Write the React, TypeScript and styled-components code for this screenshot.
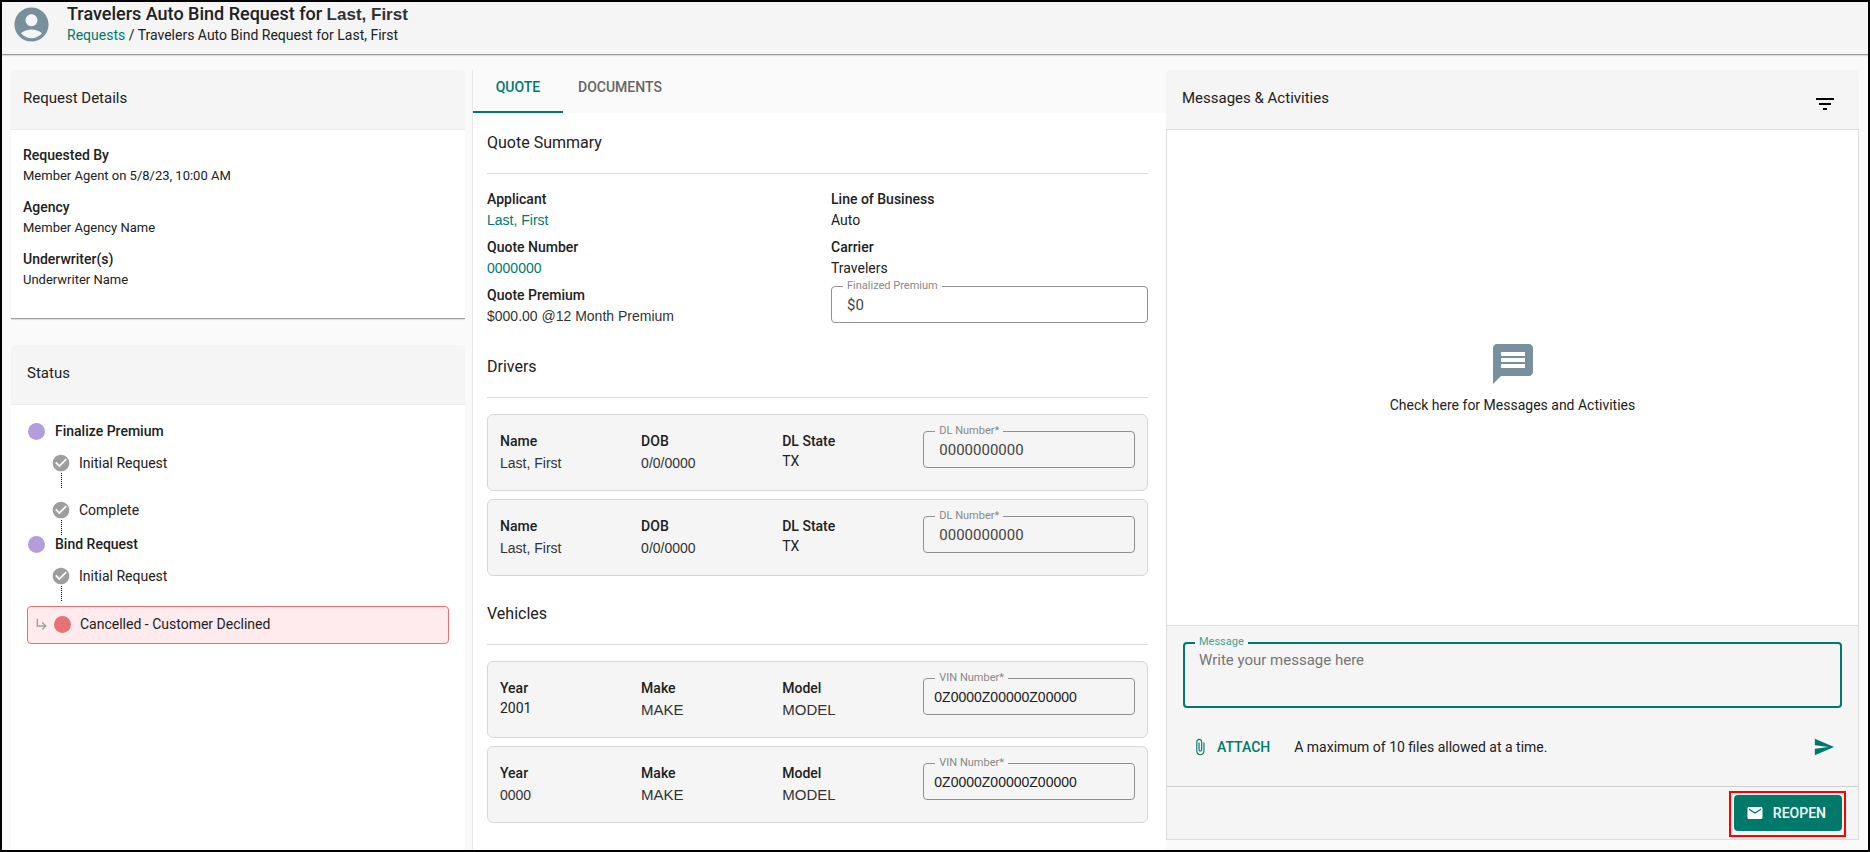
import React, { useId } from "react";
import styled, { createGlobalStyle, css } from "styled-components";
import {
  MdAccountCircle,
  MdAttachFile,
  MdCheckCircle,
  MdEmail,
  MdFilterList,
  MdMessage,
  MdSend,
  MdSubdirectoryArrowRight,
} from "react-icons/md";

const teal = "#00796b";
const ink = "#212121";
const slate = "#78909c";
const panelGrey = "#f5f5f5";
const line = "#dcdcdc";
const roboto = `Roboto, "Liberation Sans", sans-serif`;
const arial = `"Liberation Sans", Arial, sans-serif`;

const GlobalStyle = createGlobalStyle`
  *, *::before, *::after { box-sizing: border-box; }
  body {
    margin: 0;
    background: #fafafa;
    color: ${ink};
    font: 14px/20px ${roboto};
  }
  button, input, textarea { font: inherit; color: inherit; }
`;

const Page = styled.div`
  display: flex;
  flex-direction: column;
  min-height: 100vh;
  border: 2px solid #000;
`;

const TopBar = styled.header`
  display: flex;
  gap: 15px;
  padding: 1px 9px 9px;
  background: ${panelGrey};
  border-bottom: 1px solid #9e9e9e;
  box-shadow: 0 1px 1px rgba(0, 0, 0, 0.12);
  svg { flex: none; margin-top: 1px; color: ${slate}; }
`;

const Title = styled.h1`
  margin: 0;
  font-size: 18px;
  line-height: 22px;
  font-weight: 500;
  span { font-family: ${arial}; font-size: 17px; font-weight: 700; color: #333; }
`;

const Breadcrumb = styled.nav`
  line-height: 19px;
`;

const TextLink = styled.a`
  color: ${teal};
  text-decoration: none;
`;

const Columns = styled.main`
  flex: 1;
  display: grid;
  grid-template-columns: 2fr 3fr 3fr;
  padding: 15px 9px 0;
`;

const Sidebar = styled.div`
  display: flex;
  flex-direction: column;
  gap: 26px;
  padding-right: 8px;
`;

const Panel = styled.section<{ $grow?: boolean }>`
  background: #fff;
  border-radius: 4px 4px 0 0;
  ${(p) => (p.$grow ? css`flex: 1;` : css`border-bottom: 1px solid #9e9e9e; box-shadow: 0 1px 1px rgba(0, 0, 0, 0.12);`)}
`;

const PanelHeader = styled.div<{ $inset?: number; $divider?: string }>`
  display: flex;
  align-items: center;
  justify-content: space-between;
  height: 60px;
  padding: 0 ${(p) => p.$inset ?? 12}px 4px;
  background: ${panelGrey};
  border-bottom: 1px solid ${(p) => p.$divider ?? "#ececec"};
  border-radius: 4px 4px 0 0;
`;

const Heading = styled.h2`
  margin: 0;
  font-size: 15px;
  line-height: 20px;
  font-weight: 400;
`;

const Facts = styled.dl<{ $gap: number }>`
  display: flex;
  flex-direction: column;
  gap: ${(p) => p.$gap}px;
  margin: 0;
`;

const Term = styled.dt`
  line-height: 22px;
  font-weight: 500;
`;

const Value = styled.dd<{ $plain?: boolean; $large?: boolean }>`
  margin: 0;
  line-height: 20px;
  ${(p) => p.$plain && css`font-family: ${arial}; color: #333;`}
  ${(p) => p.$large && css`font-size: 15px;`}
`;

const DetailsBody = styled.div`
  padding: 14px 12px 28px;
  ${Value} { font-size: 13px; }
`;

const StatusBody = styled.div`
  padding: 17px 16px;
`;

const Stage = styled.h3`
  display: flex;
  align-items: center;
  gap: 10px;
  margin: 0;
  padding-left: 1px;
  font-size: 14px;
  line-height: 19px;
  font-weight: 500;
`;

const Dot = styled.span<{ $color: string }>`
  width: 17px;
  height: 17px;
  border-radius: 50%;
  background: ${(p) => p.$color};
`;

const Steps = styled.ul`
  margin: 0;
  padding: 0;
  list-style: none;
`;

const Step = styled.li`
  padding: 12px 0 0 24px;
`;

const StepRow = styled.div`
  display: flex;
  align-items: center;
  gap: 8px;
  height: 20px;
  svg { color: #9e9e9e; }
`;

const Connector = styled.div`
  height: 15px;
  margin-left: 10px;
  border-left: 1px dotted #000;
`;

const CancelledStep = styled.li`
  display: flex;
  align-items: center;
  height: 38px;
  margin-top: 5px;
  padding: 0 6px 2px;
  background: #ffebee;
  border: 1px solid #e57373;
  border-radius: 4px;
  svg { color: #9e9e9e; }
  ${Dot} { margin: 0 9px 0 4px; }
`;

const QuotePanel = styled.section`
  background: #fff;
  box-shadow: -1px 0 0 #e8e8e8;
`;

const Tabs = styled.div`
  display: flex;
  height: 43px;
  background: #fafafa;
`;

const Tab = styled.button<{ $active?: boolean }>`
  min-width: 90px;
  padding: 0 15px 7px;
  background: none;
  border: 0;
  border-bottom: 2px solid ${(p) => (p.$active ? teal : "transparent")};
  color: ${(p) => (p.$active ? teal : "#666")};
  font-weight: 500;
  text-transform: uppercase;
`;

const Section = styled.section`
  padding: 0 18px 0 14px;
`;

const SectionHeading = styled(Heading)`
  display: flex;
  align-items: center;
  height: 61px;
  padding-bottom: 1px;
  border-bottom: 1px solid ${line};
  font-size: 16px;
`;

const SummaryGrid = styled.div`
  display: grid;
  grid-template-columns: 1fr 1fr;
  column-gap: 27px;
  padding: 14px 0 11px;
`;

const CardList = styled.div`
  display: grid;
  gap: 8px;
  padding: 16px 0 8px;
`;

const Card = styled.div`
  display: grid;
  grid-template-columns: 2fr 2fr 2fr 3fr;
  align-items: start;
  padding: 16px 12px 15px;
  background: ${panelGrey};
  border: 1px solid #d6d6d6;
  border-radius: 6px;
  ${Term} { line-height: 20px; }
`;

const CardValue = styled(Value)`
  line-height: ${(p) => (p.$plain ? 24 : 20)}px;
`;

const FieldBox = styled.div<{ $surface: string; $spaced?: boolean }>`
  position: relative;
  margin-top: ${(p) => (p.$spaced ? 8 : 0)}px;
  label {
    position: absolute;
    top: -7px;
    left: 12px;
    padding: 0 4px;
    background: ${(p) => p.$surface};
    color: #888;
    font-size: 11px;
    line-height: 14px;
  }
`;

const Input = styled.input<{ $plain?: boolean }>`
  display: block;
  width: 100%;
  height: 37px;
  padding: 0 ${(p) => (p.$plain ? 10 : 15)}px;
  background: transparent;
  border: 1px solid #919191;
  border-radius: 4px;
  outline: none;
  font-family: ${(p) => (p.$plain ? arial : roboto)};
  font-size: ${(p) => (p.$plain ? 14 : 15)}px;
  color: ${(p) => (p.$plain ? ink : "#444")};
`;

const MessagesPanel = styled.section`
  display: flex;
  flex-direction: column;
  padding-bottom: 10px;
`;

const MessagesFrame = styled.div`
  flex: 1;
  display: flex;
  flex-direction: column;
  border: 1px solid ${line};
  border-top: 0;
`;

const EmptyState = styled.div`
  flex: 1;
  display: flex;
  flex-direction: column;
  align-items: center;
  justify-content: center;
  gap: 7px;
  background: #fff;
  svg { color: ${slate}; }
`;

const Composer = styled.form`
  padding: 16px 16px 12px;
  background: ${panelGrey};
  border-top: 1px solid ${line};
`;

const MessageBox = styled(FieldBox)`
  label { color: #4a9f95; }
`;

const MessageInput = styled.textarea`
  display: block;
  width: 100%;
  height: 66px;
  padding: 6px 14px;
  background: transparent;
  border: 2px solid ${teal};
  border-radius: 4px;
  outline: none;
  resize: none;
  font-size: 15px;
  &::placeholder { color: #757575; opacity: 1; }
`;

const ComposerActions = styled.div`
  display: flex;
  align-items: center;
  gap: 24px;
  padding: 28px 7px 16px 8px;
`;

const PlainButton = styled.button`
  display: flex;
  align-items: center;
  gap: 8px;
  padding: 0;
  background: none;
  border: 0;
  color: ${teal};
  font-weight: 500;
  text-transform: uppercase;
`;

const SendButton = styled(PlainButton)`
  margin-left: auto;
`;

const IconButton = styled(PlainButton)`
  padding: 12px 6px 0 0;
  color: #000;
`;

const Footer = styled.footer`
  display: flex;
  justify-content: flex-end;
  padding: 4px 12px 2px;
  background: ${panelGrey};
  border-top: 1px solid #d0d0d0;
`;

const Highlight = styled.div`
  padding: 2px 2px 4px 3px;
  border: 2px solid #f00;
`;

const ReopenButton = styled.button`
  display: flex;
  align-items: center;
  gap: 9px;
  height: 36px;
  padding: 0 16px 0 12px;
  background: ${teal};
  border: 0;
  border-radius: 4px;
  color: #fff;
  font-weight: 500;
  text-transform: uppercase;
`;

type FieldProps = { label: string; value: string; surface: string; spaced?: boolean; plain?: boolean };

function Field({ label, value, surface, spaced, plain }: FieldProps) {
  const id = useId();
  return (
    <FieldBox $surface={surface} $spaced={spaced}>
      <Input id={id} defaultValue={value} $plain={plain} />
      <label htmlFor={id}>{label}</label>
    </FieldBox>
  );
}

type FactProps = { term: string; plain?: boolean; children: React.ReactNode };

function Fact({ term, plain, children }: FactProps) {
  return (
    <div>
      <Term>{term}</Term>
      <Value $plain={plain}>{children}</Value>
    </div>
  );
}

function DoneStep({ children }: { children: React.ReactNode }) {
  return (
    <Step>
      <StepRow>
        <MdCheckCircle size={20} />
        {children}
      </StepRow>
      <Connector />
    </Step>
  );
}

type CardFact = { term: string; text: string; plain?: boolean; large?: boolean };
type RecordCardProps = { facts: CardFact[]; field: string; value: string; plainField?: boolean };

function RecordCard({ facts, field, value, plainField }: RecordCardProps) {
  return (
    <Card>
      {facts.map(({ term, text, plain, large }) => (
        <Facts $gap={0} key={term}>
          <Term>{term}</Term>
          <CardValue $plain={plain} $large={large}>{text}</CardValue>
        </Facts>
      ))}
      <Field label={field} value={value} surface={panelGrey} plain={plainField} />
    </Card>
  );
}

const drivers = [0, 1];
const vehicles = ["2001", "0000"];

export default function App() {
  return (
    <Page>
      <GlobalStyle />
      <TopBar>
        <MdAccountCircle size={41} />
        <div>
          <Title>
            Travelers Auto Bind Request for <span>Last, First</span>
          </Title>
          <Breadcrumb>
            <TextLink href="#requests">Requests</TextLink> / Travelers Auto Bind Request for Last, First
          </Breadcrumb>
        </div>
      </TopBar>
      <Columns>
        <Sidebar>
          <Panel>
            <PanelHeader>
              <Heading>Request Details</Heading>
            </PanelHeader>
            <DetailsBody>
              <Facts $gap={10}>
                <Fact term="Requested By">Member Agent on 5/8/23, 10:00 AM</Fact>
                <Fact term="Agency">Member Agency Name</Fact>
                <Fact term="Underwriter(s)">Underwriter Name</Fact>
              </Facts>
            </DetailsBody>
          </Panel>
          <Panel $grow>
            <PanelHeader $inset={16}>
              <Heading>Status</Heading>
            </PanelHeader>
            <StatusBody>
              <Stage><Dot $color="#b39ddb" />Finalize Premium</Stage>
              <Steps>
                <DoneStep>Initial Request</DoneStep>
                <DoneStep>Complete</DoneStep>
              </Steps>
              <Stage><Dot $color="#b39ddb" />Bind Request</Stage>
              <Steps>
                <DoneStep>Initial Request</DoneStep>
                <CancelledStep>
                  <MdSubdirectoryArrowRight size={16} />
                  <Dot $color="#e57373" />
                  Cancelled - Customer Declined
                </CancelledStep>
              </Steps>
            </StatusBody>
          </Panel>
        </Sidebar>

        <QuotePanel>
          <Tabs role="tablist">
            <Tab type="button" role="tab" aria-selected="true" $active>Quote</Tab>
            <Tab type="button" role="tab" aria-selected="false">Documents</Tab>
          </Tabs>
          <Section>
            <SectionHeading>Quote Summary</SectionHeading>
            <SummaryGrid>
              <Facts $gap={6}>
                <Fact term="Applicant" plain><TextLink href="#applicant">Last, First</TextLink></Fact>
                <Fact term="Quote Number" plain><TextLink href="#quote">0000000</TextLink></Fact>
                <Fact term="Quote Premium" plain>$000.00 @12 Month Premium</Fact>
              </Facts>
              <div>
                <Facts $gap={6}>
                  <Fact term="Line of Business">Auto</Fact>
                  <Fact term="Carrier">Travelers</Fact>
                </Facts>
                <Field label="Finalized Premium" value="$0" surface="#fff" spaced />
              </div>
            </SummaryGrid>
          </Section>
          <Section>
            <SectionHeading>Drivers</SectionHeading>
            <CardList>
              {drivers.map((driver) => (
                <RecordCard
                  key={driver}
                  facts={[
                    { term: "Name", text: "Last, First", plain: true },
                    { term: "DOB", text: "0/0/0000", plain: true },
                    { term: "DL State", text: "TX" },
                  ]}
                  field="DL Number*"
                  value="0000000000"
                />
              ))}
            </CardList>
          </Section>
          <Section>
            <SectionHeading>Vehicles</SectionHeading>
            <CardList>
              {vehicles.map((year) => (
                <RecordCard
                  key={year}
                  facts={[
                    { term: "Year", text: year, plain: year === "0000" },
                    { term: "Make", text: "MAKE", plain: true, large: true },
                    { term: "Model", text: "MODEL", plain: true, large: true },
                  ]}
                  field="VIN Number*"
                  value="0Z0000Z00000Z00000"
                  plainField
                />
              ))}
            </CardList>
          </Section>
        </QuotePanel>

        <MessagesPanel>
          <PanelHeader $inset={16} $divider={line}>
            <Heading>Messages &amp; Activities</Heading>
            <IconButton type="button" aria-label="Filter">
              <MdFilterList size={24} />
            </IconButton>
          </PanelHeader>
          <MessagesFrame>
            <EmptyState>
              <MdMessage size={48} />
              Check here for Messages and Activities
            </EmptyState>
            <Composer>
              <MessageBox $surface={panelGrey}>
                <MessageInput id="message" placeholder="Write your message here" />
                <label htmlFor="message">Message</label>
              </MessageBox>
              <ComposerActions>
                <PlainButton type="button"><MdAttachFile size={18} />Attach</PlainButton>
                A maximum of 10 files allowed at a time.
                <SendButton type="submit" aria-label="Send"><MdSend size={22} /></SendButton>
              </ComposerActions>
            </Composer>
            <Footer>
              <Highlight>
                <ReopenButton type="button"><MdEmail size={18} />Reopen</ReopenButton>
              </Highlight>
            </Footer>
          </MessagesFrame>
        </MessagesPanel>
      </Columns>
    </Page>
  );
}
